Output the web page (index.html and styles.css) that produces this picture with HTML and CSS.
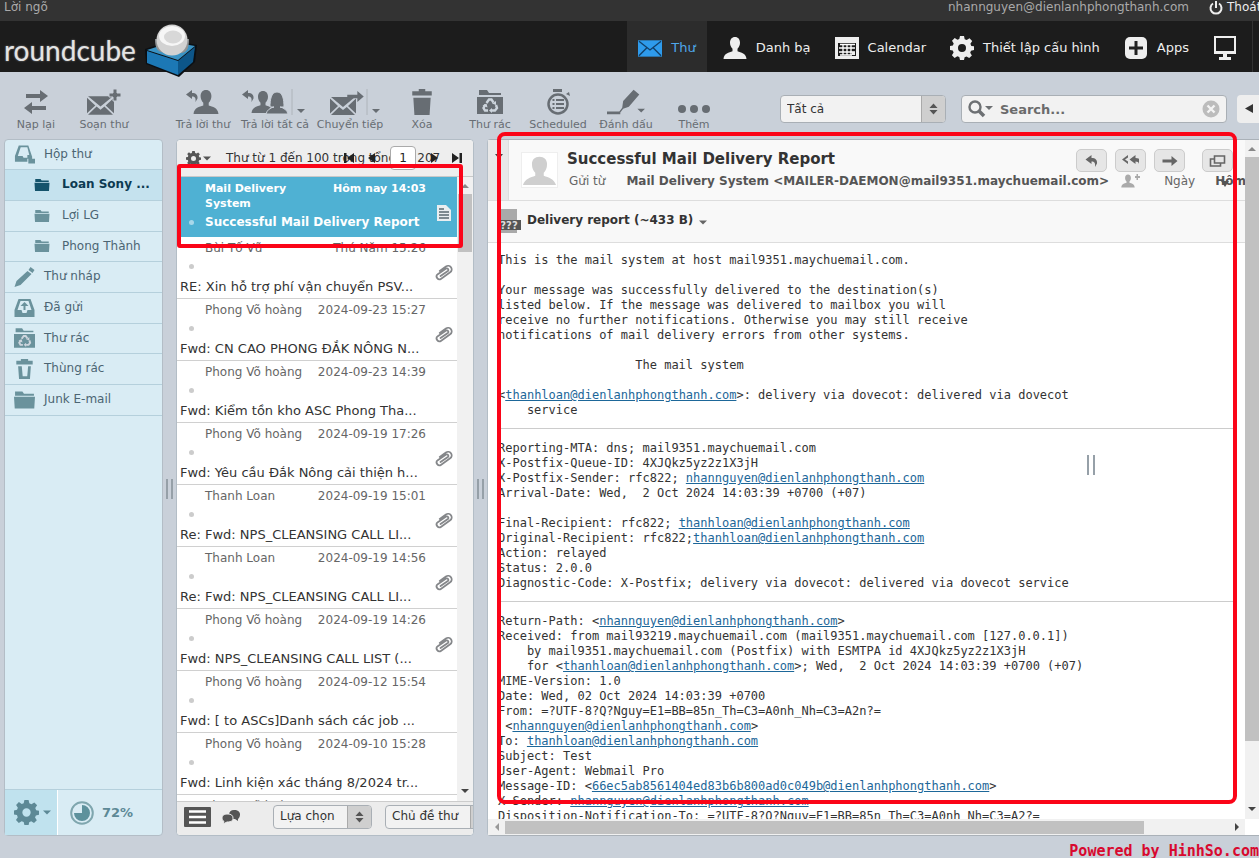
FILE: index.html
```html
<!DOCTYPE html>
<html lang="vi">
<head>
<meta charset="utf-8">
<title>Roundcube Webmail</title>
<link rel="stylesheet" href="styles.css">
</head>
<body>
<svg class="defs" aria-hidden="true">
  <symbol id="gear" viewBox="0 0 24 24"><path fill-rule="evenodd" d="M10 0h4l.7 3.2 2 .8L19.500 2.300l2.700 2.700-1.800 2.700.9 2.200L24 10.300v3.800l-3 .7-.8 2 1.700 2.700-2.700 2.600-2.700-1.600-1.900.8L14 24h-4l-.7-2.900-2-.8-2.700 1.700-2.700-2.700L3.600 16.500l-.8-2L0 14v-3.900l2.900-.7.8-2L2 4.800 4.700 2l2.700 1.800 1.900-.8zM12 8a4 4 0 1 0 0 8 4 4 0 0 0 0-8z"/></symbol>
  <symbol id="person" viewBox="0 0 24 24"><path d="M12 1c3.200 0 5 2.400 5 5.700 0 2.300-1 4.600-2.500 6v2.500c3.500 1.200 8.500 2 9 7.800H.5c.5-5.800 5.500-6.600 9-7.800v-2.500C8 11.300 7 9 7 6.700 7 3.400 8.800 1 12 1z"/></symbol>
  <symbol id="folder" viewBox="0 0 20 16"><path d="M1 0h7l1.500 2H19v2H1zM0 5h20l-.7 11H.7z"/></symbol>
  <symbol id="trash" viewBox="0 0 20 24"><path d="M7 0h6v2h6v4H1V2h6zM2 8h16l-1 16H3z"/></symbol>
  <symbol id="recycle" viewBox="0 0 26 24"><path d="M2 0h8l2 3h12v2H2zM0 7h26v17H0z"/><g fill="none" stroke="#cdd5dd" stroke-width="2.400"><path d="M9.500 13l2.500-3.500h2.500l2 3M19 15l1 3-2 2.500h-3M11 20.500H8L6.500 18l2-3.500"/></g><path fill="#cdd5dd" d="M15 13.500l4-2.500v4zM15 18v5l-3-2.500zM5.500 15.500l4-2 1 4z"/></symbol>
  <symbol id="envelope" viewBox="0 0 26 18"><path d="M1 0h24L13 10zM0 1.500L8 9 0 16.500zM26 1.500L18 9l8 7.500zM9.200 10L13 13l3.800-3L25 18H1z"/></symbol>
  <symbol id="back" viewBox="0 0 12 12"><path d="M0 4.500L6 0v3c4 0 6 2 5.500 5.500L9.500 12C10 8 9 6.500 6 6.500V9z"/></symbol>
  <symbol id="forward" viewBox="0 0 18 12"><path d="M0 4h11V0l7 6-7 6V8H0z"/></symbol>
  <symbol id="clip" viewBox="0 0 18 18"><path transform="rotate(8 9 9)" fill="none" stroke="#85878a" stroke-width="1.800" stroke-linecap="round" d="M6 12.500l6.500-6a1.500 1.500 0 0 0-2-2.200L3 11a2.800 2.800 0 0 0 4 4l8-7.500a3.500 3.500 0 0 0-5-5.200L4.500 7.500"/></symbol>
  <symbol id="updown" viewBox="0 0 10 12"><path d="M5 0l4.500 5h-9zM5 12L.5 7h9z"/></symbol>
</svg>

<div class="topline">
  <span>Lời ngõ</span>
  <span class="account">nhannguyen@dienlanhphongthanh.com</span>
  <a class="logout" href="#"><svg viewBox="0 0 14 14"><path d="M4 2.500a5.500 5.500 0 1 0 6 0M7 0v7" fill="none" stroke="currentColor" stroke-width="2"/></svg>Thoát</a>
</div>

<header class="header">
  <div class="brand"><span class="wordmark">roundcube</span>
    <svg class="cube" viewBox="0 -3 54 54"><path d="M1 22L28 13l25 5-2 17-16 15L2 37z" fill="#0b0f13"/><path d="M3 23l25-8 23 4-17 14z" fill="#3a93c4"/><path d="M3 24l31 10v14L3 36z" fill="#1c78b5"/><path d="M51 20L34 34v14l15-13z" fill="#0d5689"/><path d="M11 12h34c0 16-6 14-17 14s-17 0-17-14z" fill="#8f9294"/><circle cx="28" cy="13" r="15.500" fill="#d2d2d2"/><ellipse cx="28" cy="9" rx="13" ry="10" fill="#f6f6f6"/><ellipse cx="29" cy="10" rx="9" ry="6.500" fill="#d8d8d8"/></svg>
  </div>
  <nav class="tasks">
    <a class="task active" href="#"><svg viewBox="0 0 25 18"><path d="M0 1h25v17H0z" fill="#2e9bec"/><path d="M1 2l11.500 9L24 2M1 17l8-8M24 17l-8-8" fill="none" stroke="#123f68" stroke-width="1.400"/></svg>Thư</a>
    <a class="task" href="#"><svg><use href="#person"/></svg>Danh bạ</a>
    <a class="task" href="#"><svg viewBox="0 0 24 24"><path fill-rule="evenodd" d="M0 1h24v22H0zM3 7v13h18V7z"/><path d="M4 12h16M4 16h16M8 8v11M12 8v11M16 8v11M5 19h12M5 8.500h15" stroke="#fff" stroke-width="1.300"/><path d="M17 16h3v3h-3z"/></svg>Calendar</a>
    <a class="task" href="#"><svg><use href="#gear"/></svg>Thiết lập cấu hình</a>
    <a class="task" href="#"><svg viewBox="0 0 24 24"><rect x="1" y="1" width="22" height="22" rx="5"/><path d="M12 5v14M5 12h14" stroke="#222" stroke-width="3"/></svg>Apps</a>
    <a class="task screen" href="#" aria-label="Desktop"><svg viewBox="0 0 24 24"><path fill-rule="evenodd" d="M1 0h22v18H1zM3 2v13h18V2zM10 18h4v3h4v3H6v-3h4z"/></svg></a>
  </nav>
</header>

<div class="toolbar">
  <button class="tool"><svg viewBox="0 0 26 26"><path d="M3 5h14V1l8 6-8 6V9H3zM23 17H9v-4l-8 6 8 6v-4h14z"/></svg>Nạp lại</button>
  <button class="tool"><svg class="wide" viewBox="0 0 36 26"><svg x="1" y="7" width="27" height="19"><use href="#envelope"/></svg><path d="M27 0h4v4h4v4h-4v4h-4V8h-4V4h4z" stroke="#c9d0d9"/></svg>Soạn thư</button>
  <button class="tool reply"><svg class="wide" viewBox="0 0 36 26"><svg x="1" y="1" width="12" height="12"><use href="#back"/></svg><svg x="8" y="0" width="26" height="26"><use href="#person"/></svg></svg>Trả lời thư</button>
  <button class="tool w74"><svg class="xwide" viewBox="0 0 66 26"><svg x="0" y="1" width="12" height="12"><use href="#back"/></svg><svg x="9" y="0" width="24" height="26"><use href="#person"/></svg><path d="M28 18c0-7 1-15 7-15s7 8 7 15h-4c4 1 7 3 8 7H24c1-4 4-6 8-7z" stroke="#c9d0d9"/><path d="M50 0v26" stroke="#aeb4ba"/><path d="M55 20h8l-4 4z"/></svg>Trả lời tất cả</button>
  <button class="tool w76"><svg class="xwide" viewBox="0 0 66 26"><svg x="13" y="8" width="26" height="18"><use href="#envelope"/></svg><svg x="30" y="2" width="17" height="11"><use href="#forward"/></svg><path d="M50 0v26" stroke="#aeb4ba"/><path d="M55 20h8l-4 4z"/></svg>Chuyển tiếp</button>
  <button class="tool"><svg><use href="#trash"/></svg>Xóa</button>
  <button class="tool"><svg><use href="#recycle"/></svg>Thư rác</button>
  <button class="tool"><svg viewBox="0 0 26 26"><path d="M8 0h9v3H8zM21 5l3-2 1 4z"/><circle cx="13" cy="15" r="9.500" fill="none" stroke="currentColor" stroke-width="2.500"/><path d="M11 11h8M11 15h8M11 19h8M7.500 11h2M7.500 15h2M7.500 19h2" stroke="currentColor" stroke-width="2"/></svg>Scheduled</button>
  <button class="tool"><svg class="wide" viewBox="0 0 40 26"><path d="M28 0l6 5-11 13-6 2-3 4-1-1 3-4 1-7zM0 23h14v3H0zM32 20h8l-4 4z"/></svg>Đánh dấu</button>
  <button class="tool"><svg class="wide" viewBox="0 0 36 26"><circle cx="6" cy="20" r="4"/><circle cx="18" cy="20" r="4"/><circle cx="30" cy="20" r="4"/></svg>Thêm</button>
  <div class="filters">
    <div class="picker filter"><select aria-label="Bộ lọc"><option>Tất cả</option></select><svg><use href="#updown"/></svg></div>
    <div class="search">
      <svg class="lens" viewBox="0 0 26 18"><circle cx="7" cy="7" r="5.500" fill="none" stroke="#6d7073" stroke-width="2.400"/><path d="M11 11l5 5" stroke="#6d7073" stroke-width="3.500"/><path d="M17 6h8l-4 4z" fill="#6d7073"/></svg>
      <input type="text" placeholder="Search..." aria-label="Search">
      <button class="clear" aria-label="Clear"><svg viewBox="0 0 18 18"><circle cx="9" cy="9" r="8.500" fill="#bcbcbc"/><path d="M5.500 5.500l7 7M12.500 5.500l-7 7" stroke="#f4f4f4" stroke-width="2.400"/></svg></button>
    </div>
    <button class="collapse" aria-label="Collapse"><svg viewBox="0 0 8 10"><path d="M8 0v9L0 4.500z"/></svg></button>
  </div>
</div>

<main class="main">
  <aside class="folders">
    <ul>
      <li><svg viewBox="0 0 22 20"><path fill-rule="evenodd" d="M5 1h10l4 12v2h-5v3H1v-6zM7 3L4 12h5l1 2h4V11h2L14 3zM15 15h7v5h-7z"/></svg>Hộp thư</li>
      <li class="sub current"><svg><use href="#folder"/></svg>Loan Sony ...</li>
      <li class="sub"><svg><use href="#folder"/></svg>Lợi LG</li>
      <li class="sub"><svg><use href="#folder"/></svg>Phong Thành</li>
      <li><svg viewBox="0 0 20 20"><path d="M16 0l4 3-2 3-4-3zM13 4l4 3L6 18l-6 2 2-6z"/></svg>Thư nháp</li>
      <li><svg viewBox="0 0 20 20"><path fill-rule="evenodd" d="M4 1h12l4 11v7H0v-7zM6 3l-3 9h4l1 3h4l1-3h4l-3-9zM10 4l4 4h-3v4H9V8H6z"/></svg>Đã gửi</li>
      <li><svg><use href="#recycle"/></svg>Thư rác</li>
      <li><svg viewBox="0 0 20 22"><path fill-rule="evenodd" d="M6 0h8v2h5v4H1V2h5zM3 8h4l1 11h5l1-11h3l-1 14H4z"/></svg>Thùng rác</li>
      <li><svg><use href="#folder"/></svg>Junk E-mail</li>
    </ul>
    <div class="folder-foot">
      <button class="options" aria-label="Options"><svg class="big"><use href="#gear"/></svg><svg class="arrow" viewBox="0 0 8 4"><path d="M0 0h8L4 4z"/></svg></button>
      <div class="quota"><svg viewBox="0 0 24 24"><circle cx="12" cy="12" r="10.800" fill="none" stroke="#7fa6ae" stroke-width="2"/><path d="M12 12V4a8 8 0 1 1-8 8z" fill="#5d919c"/></svg>72%</div>
    </div>
    <span class="splitter"></span>
  </aside>

  <section class="list">
    <div class="list-head">
      <svg class="cog"><use href="#gear"/></svg><svg class="arrow" viewBox="0 0 8 4"><path d="M0 0h8L4 4z"/></svg>
      <span class="count">Thư từ 1 đến 100 trong tổng số 207</span>
      <div class="pager">
        <svg viewBox="0 0 10 10"><path d="M0 0h2.500v10H0zM10 0v10L3 5z"/></svg>
        <svg viewBox="0 0 10 10"><path d="M8 0v10L1 5z"/></svg>
        <input type="text" value="1" aria-label="Trang">
        <svg viewBox="0 0 10 10"><path d="M2 0v10l7-5z"/></svg>
        <svg viewBox="0 0 10 10"><path d="M10 0H7.500v10H10zM0 0v10l7-5z"/></svg>
      </div>
    </div>
    <div class="list-body">
      <div class="rows">
        <article class="row selected"><span class="from">Mail Delivery System</span><time>Hôm nay 14:03</time><p>Successful Mail Delivery Report</p><svg class="doc" viewBox="0 0 14 16"><path d="M0 0h9l5 5v11H0z" fill="#e9eef0"/><path d="M2 4h5M2 7h10M2 10h10M2 13h10" stroke="#5a6a70" stroke-width="1.400"/></svg></article>
        <article class="row"><span class="from">Bùi Tố Vũ</span><time>Thứ Năm 15:26</time><p>RE: Xin hỗ trợ phí vận chuyển PSV...</p><svg><use href="#clip"/></svg></article>
        <article class="row"><span class="from">Phong Võ hoàng</span><time>2024-09-23 15:27</time><p>Fwd: CN CAO PHONG ĐẮK NÔNG N...</p><svg><use href="#clip"/></svg></article>
        <article class="row"><span class="from">Phong Võ hoàng</span><time>2024-09-23 14:39</time><p>Fwd: Kiểm tồn kho ASC Phong Tha...</p></article>
        <article class="row"><span class="from">Phong Võ hoàng</span><time>2024-09-19 17:26</time><p>Fwd: Yêu cầu Đắk Nông cải thiện h...</p><svg><use href="#clip"/></svg></article>
        <article class="row"><span class="from">Thanh Loan</span><time>2024-09-19 15:01</time><p>Re: Fwd: NPS_CLEANSING CALL LI...</p><svg><use href="#clip"/></svg></article>
        <article class="row"><span class="from">Thanh Loan</span><time>2024-09-19 14:56</time><p>Re: Fwd: NPS_CLEANSING CALL LI...</p><svg><use href="#clip"/></svg></article>
        <article class="row"><span class="from">Phong Võ hoàng</span><time>2024-09-19 14:26</time><p>Fwd: NPS_CLEANSING CALL LIST (...</p><svg><use href="#clip"/></svg></article>
        <article class="row"><span class="from">Phong Võ hoàng</span><time>2024-09-12 15:54</time><p>Fwd: [ to ASCs]Danh sách các job ...</p></article>
        <article class="row"><span class="from">Phong Võ hoàng</span><time>2024-09-10 15:28</time><p>Fwd: Linh kiện xác tháng 8/2024 tr...</p></article>
        <article class="row"><span class="from">Phong Võ hoàng</span><time>2024-09-10 15:27</time><p></p></article>
      </div>
      <div class="vbar"><i class="up"></i><i class="thumb"></i><i class="down"></i></div>
    </div>
    <div class="list-foot">
      <svg class="mode" viewBox="0 0 27 20"><rect width="27" height="20" rx="1"/><path d="M5 4.500h17M5 10h17M5 15.500h17" stroke="#fff" stroke-width="2.600"/></svg>
      <svg class="threads" viewBox="0 0 18 14"><path d="M12 0c4 0 6 2 6 4.500 0 2-1 3.500-2 4.500v2l-3-2c-5 0-6-2-6-4.500S9 0 12 0z"/><path d="M6 4c-4 0-6 1.500-6 4 0 1.500.5 2.500 2 3.500L1 14l4-2c5 0 6-1.500 6-4S9 4 6 4z" stroke="#ececec"/></svg>
      <div class="picker choose"><select aria-label="Lựa chọn"><option>Lựa chọn</option></select><svg><use href="#updown"/></svg></div>
      <div class="picker threads-pick"><select aria-label="Chủ đề"><option>Chủ đề thư</option></select><svg><use href="#updown"/></svg></div>
    </div>
    <span class="splitter"></span>
    <span class="mark mark-row"></span>
  </section>

  <section class="preview">
    <div class="pane">
      <div class="message">
        <div class="msg-head">
          <div class="toggle"><svg class="arrow" viewBox="0 0 8 5"><path d="M0 0h8L4 5z"/></svg></div>
          <svg class="avatar" viewBox="0 0 37 36"><path d="M0 0h37v36H0z" fill="#fff"/><path d="M18.500 4c5 0 8 3 8 8 0 4-1.500 7-3.500 9v3c5 2 11 3 13 10H1c2-7 8-8 13-10v-3c-2-2-3.500-5-3.500-9 0-5 3-8 8-8z" fill="#cfcfcf"/></svg>
          <div class="subject">
            <h1>Successful Mail Delivery Report</h1>
            <dl><dt>Gửi từ</dt><dd>Mail Delivery System &lt;MAILER-DAEMON@mail9351.maychuemail.com&gt;</dd><dd><svg class="addcontact" viewBox="0 0 19 14"><svg width="14" height="14"><use href="#person"/></svg><path d="M14 2h1.500V0h1.500v2H19v2h-2v2h-1.500V4H14z"/></svg></dd><dt>Ngày</dt><dd class="date">Hôm</dd></dl>
          </div>
          <div class="actions">
            <button aria-label="Reply"><svg><use href="#back"/></svg></button>
            <button aria-label="Reply all"><svg viewBox="0 0 17 12"><path d="M6 0v2.500L3 4.500l3 2V9L0 4.500z"/><svg x="5" width="12" height="12"><use href="#back"/></svg></svg></button>
            <button aria-label="Forward"><svg viewBox="0 0 16 12"><path d="M1 4.500h9V1l6 5-6 5V7.500H1z"/></svg></button>
            <button aria-label="Open"><svg viewBox="0 0 16 12"><path d="M5 1h10v7H5zM5 4H1v7h10V8" fill="none" stroke="currentColor" stroke-width="1.600"/></svg></button>
          </div>
          <svg class="more" viewBox="0 0 8 6"><path d="M0 0h8L4 6z"/></svg>
        </div>
        <div class="attachment">
          <svg class="unknown" viewBox="0 0 24 24"><path d="M1 0h19v12H1z" fill="#a9a9a9"/><path d="M0 11h24v10H0z" fill="#555"/><path d="M1 21h19v3H1z" fill="#a9a9a9"/><text x="12" y="20" text-anchor="middle">???</text></svg>
          <strong>Delivery report (~433 B)</strong>
          <svg class="arrow" viewBox="0 0 8 4"><path d="M0 0h8L4 4z"/></svg>
        </div>
        <div class="text">
<pre>This is the mail system at host mail9351.maychuemail.com.

Your message was successfully delivered to the destination(s)
listed below. If the message was delivered to mailbox you will
receive no further notifications. Otherwise you may still receive
notifications of mail delivery errors from other systems.

                   The mail system

&lt;<a href="#">thanhloan@dienlanhphongthanh.com</a>&gt;: delivery via dovecot: delivered via dovecot
    service</pre>
<pre>Reporting-MTA: dns; mail9351.maychuemail.com
X-Postfix-Queue-ID: 4XJQkz5yz2z1X3jH
X-Postfix-Sender: rfc822; <a href="#">nhannguyen@dienlanhphongthanh.com</a>
Arrival-Date: Wed,  2 Oct 2024 14:03:39 +0700 (+07)

Final-Recipient: rfc822; <a href="#">thanhloan@dienlanhphongthanh.com</a>
Original-Recipient: rfc822;<a href="#">thanhloan@dienlanhphongthanh.com</a>
Action: relayed
Status: 2.0.0
Diagnostic-Code: X-Postfix; delivery via dovecot: delivered via dovecot service</pre>
<pre>Return-Path: &lt;<a href="#">nhannguyen@dienlanhphongthanh.com</a>&gt;
Received: from mail93219.maychuemail.com (mail9351.maychuemail.com [127.0.0.1])
    by mail9351.maychuemail.com (Postfix) with ESMTPA id 4XJQkz5yz2z1X3jH
    for &lt;<a href="#">thanhloan@dienlanhphongthanh.com</a>&gt;; Wed,  2 Oct 2024 14:03:39 +0700 (+07)
MIME-Version: 1.0
Date: Wed, 02 Oct 2024 14:03:39 +0700
From: =?UTF-8?Q?Nguy=E1=BB=85n_Th=C3=A0nh_Nh=C3=A2n?=
 &lt;<a href="#">nhannguyen@dienlanhphongthanh.com</a>&gt;
To: <a href="#">thanhloan@dienlanhphongthanh.com</a>
Subject: Test
User-Agent: Webmail Pro
Message-ID: &lt;<a href="#">66ec5ab8561404ed83b6b800ad0c049b@dienlanhphongthanh.com</a>&gt;
X-Sender: <a href="#">nhannguyen@dienlanhphongthanh.com</a>
Disposition-Notification-To: =?UTF-8?Q?Nguy=E1=BB=85n_Th=C3=A0nh_Nh=C3=A2?=</pre>
        </div>
      </div>
      <div class="vbar"><i class="up"></i><i class="thumb"></i><i class="down"></i></div>
      <div class="hbar"><i class="left"></i><i class="thumb"></i><i class="right"></i></div>
    </div>
    <span class="splitter inner"></span>
    <span class="mark mark-message"></span>
  </section>
</main>
<footer class="credit">Powered by HinhSo.com</footer>
</body>
</html>
```
FILE: styles.css
```css
* { box-sizing: border-box; }
html, body { height: 100%; }
body {
  margin: 0;
  display: flex;
  flex-direction: column;
  overflow: hidden;
  background: #c9d0d9;
  color: #333;
  font: 12px/15px "DejaVu Sans", Verdana, sans-serif;
}
svg { fill: currentColor; flex: none; display: block; }
.defs { position: absolute; width: 0; height: 0; }
button, input, select { font: inherit; color: inherit; margin: 0; }
button { border: 0; padding: 0; background: none; }
a { color: inherit; }
ul, dl, dd, p, h1, pre { margin: 0; padding: 0; }

.topline {
  display: flex;
  justify-content: flex-end;
  height: 21px;
  padding-left: 4px;
  background: #333;
  color: #aaa;
  white-space: nowrap;
}
.topline span:first-child { margin-right: auto; }
.logout { display: flex; width: 50px; margin-left: 20px; color: #eee; text-decoration: none; gap: 4px; }
.logout svg { width: 14px; height: 14px; margin-top: 1px; }

.header { display: flex; height: 51px; background: #1c1c1c; }
.brand { display: flex; padding: 3px 0 0 4px; gap: 8px; flex: 1; }
.wordmark { color: #e4e4e4; font: 28px/52px Lato, sans-serif; text-shadow: 0 0 2px #888; }
.cube { width: 54px; height: 54px; position: relative; z-index: 1; }
.tasks { display: flex; white-space: nowrap; }
.task { display: flex; align-items: center; gap: 9px; padding: 2px 12px 0; color: #eee; font-size: 13px; text-decoration: none; }
.task svg { width: 24px; height: 24px; }
.task.active { background: #2c2c2c; color: #4fa8ea; margin-right: 4px; padding: 2px 11px 0; }
.screen { margin-right: 6px; border-right: 1px solid #333; padding-right: 15px; }

.toolbar { display: flex; height: 67px; padding-left: 2px; }
.tool {
  display: flex; flex-direction: column; align-items: center; flex: none;
  width: 68px; padding: 17px 0 0; gap: 2px;
  color: #676d73; font-size: 11px; line-height: 15px; white-space: nowrap;
}
.tool > svg { width: 26px; height: 26px; }
.tool > svg.wide { width: 38px; }
.tool > svg.xwide { width: 66px; }
.reply { width: 70px; margin-left: 30px; }
.w74 { width: 74px; }
.w76 { width: 76px; }
.filters { display: flex; flex: 1; justify-content: flex-end; align-items: flex-start; padding-top: 23px; min-width: 0; }
.picker { display: flex; align-items: center; border: 1px solid #a9afb5; border-radius: 4px; background: #f2f2f2; overflow: hidden; color: #333; }
.picker select { appearance: none; border: 0; background: none; flex: 1; min-width: 0; padding: 0 6px; }
.picker svg { width: 24px; height: 28px; padding: 8px 7px; background: #cfcfcf; border-left: 1px solid #aaa; color: #555; }
.filter { width: 166px; height: 28px; margin-right: 15px; }
.search { display: flex; align-items: center; width: 266px; height: 28px; padding: 0 6px; gap: 6px; border: 1px solid #a9afb5; border-radius: 4px; background: #f2f2f2; }
.lens { width: 26px; height: 18px; }
.search input { flex: 1; min-width: 0; border: 0; background: none; padding: 0; font-size: 13px; font-weight: bold; }
.search input::placeholder { color: #6b6b6b; opacity: 1; }
.clear svg { width: 18px; height: 18px; }
.collapse { width: 22px; height: 28px; margin-left: 10px; padding-left: 8px; border-radius: 4px 0 0 4px; background: #eee; }
.collapse svg { width: 8px; height: 10px; }

.main { flex: 1; min-height: 0; display: grid; grid-template-columns: 159px 298px minmax(0, 1fr); gap: 14px; padding-left: 4px; }
.main > .list { margin-left: -1px; margin-right: 1px; }
.main > .preview { margin-left: -2px; }
.folders, .list, .preview { position: relative; display: flex; flex-direction: column; min-height: 0; }
.folders, .list { border: 1px solid #b3bdc6; border-radius: 4px; }
.folders { background: #d9ecf4; color: #4c6573; }
.folders ul { flex: 1; list-style: none; }
.folders li { display: flex; align-items: center; gap: 9px; height: 31px; padding: 0 0 1px 9px; border-bottom: 1px solid #b5d0dc; }
.folders li:nth-child(3n+1) { height: 30px; }
.folders li svg { width: 21px; height: 20px; color: #6a929c; }
.folders .sub { padding-left: 29px; gap: 12px; }
.folders .sub svg { width: 16px; height: 12px; }
.folders .current { background: #c5e2ee; color: #0d3b52; font-weight: bold; }
.folders .current svg { color: #14536b; }
.folder-foot { display: flex; height: 46px; border-top: 1px solid #b5d0dc; color: #5d8996; }
.options { display: flex; align-items: center; gap: 4px; width: 53px; padding-left: 9px; background: #c0e2ee; border-right: 1px solid #fff; }
.options .big { width: 25px; height: 25px; }
.arrow { width: 8px; height: 5px; }
.quota { display: flex; align-items: center; gap: 8px; padding-left: 12px; font-size: 13px; font-weight: bold; }
.quota svg { width: 24px; height: 24px; }

.splitter { position: absolute; right: -11px; top: 339px; width: 7px; height: 20px; border: solid #96a0a8; border-width: 0 2px; }
.splitter.inner { right: 164px; top: 315px; width: 8px; }
.mark { position: absolute; border: 4px solid #fb0418; pointer-events: none; }
.mark-row { left: 0; top: 24px; width: 286px; height: 84px; border-radius: 3px; }
.mark-message { left: 9px; right: 22px; top: -8px; bottom: 31px; border-radius: 8px; }

.list { background: #fff; }
.list-head { position: relative; display: flex; align-items: center; height: 37px; padding-left: 9px; background: #eee; border-bottom: 1px solid #c8c8c8; border-radius: 4px 4px 0 0; color: #555; }
.cog { width: 15px; height: 15px; margin-right: 2px; }
.count { margin-left: 15px; color: #333; white-space: nowrap; }
.pager { position: absolute; right: 11px; top: 6px; display: flex; align-items: center; gap: 13px; color: #222; }
.pager svg { width: 10px; height: 10px; }
.pager input { width: 26px; height: 24px; padding: 0; text-align: center; border: 1px solid #aaa; border-radius: 4px; background: #fff; }
.list-body { flex: 1; min-height: 0; display: flex; overflow: hidden; }
.rows { flex: 1; min-width: 0; }
.row {
  position: relative; height: 62px; padding: 4px 31px 0 3px;
  display: grid; grid-template-columns: 25px minmax(0, 1fr) auto; grid-template-rows: 24px 14px 15px;
  border-bottom: 1px solid #d0d0d0; color: #666; white-space: nowrap;
}
.row::before { content: ""; position: absolute; left: 12px; top: 27px; width: 5px; height: 5px; border-radius: 50%; background: #ccc; }
.from { grid-column: 2; }
.row p { grid-column: 1 / -1; grid-row: 3; color: #333; margin-right: -20px; font-size: 13px; }
.row > svg { position: absolute; right: 4px; top: 27px; width: 18px; height: 18px; }
.row.selected { height: 60px; background: #4fb1d3; border-bottom: 0; color: #fff; font-weight: bold; grid-template-rows: 34px 15px; font-size: 11px; }
.row.selected .from { white-space: normal; }
.row.selected p { grid-column: 2 / -1; grid-row: 2; color: #fff; font-size: 12px; }
.row.selected::before { top: 43px; background: #a8d8ea; }
.row > svg.doc { right: 6px; top: 28px; width: 14px; height: 16px; }
.list-foot { display: flex; align-items: center; height: 34px; padding: 0 0 4px 7px; background: #ececec; border-top: 1px solid #ccc; overflow: hidden; color: #555; border-radius: 0 0 4px 4px; }
.list-foot .mode { width: 27px; height: 20px; margin-right: 11px; }
.threads { width: 18px; height: 14px; }
.choose { width: 99px; height: 24px; margin-left: 33px; flex: none; }
.threads-pick { width: 110px; height: 24px; margin-left: 13px; flex: none; }

.vbar { position: relative; width: 16px; background: #f1f1f1; display: flex; flex-direction: column; align-items: center; flex: none; }
.vbar .thumb { width: 14px; background: #c1c1c1; height: 58px; }
.up, .down { width: 8px; height: 17px; }
.up::before, .down::before, .left::before, .right::before { content: ""; display: block; border: 4px solid transparent; }
.up::before { border-bottom-color: #888; margin-top: 3px; }
.down { margin-top: auto; height: 12px; }
.down::before { border-top-color: #444; }

.preview { border-top: 1px solid #aab1b8; border-left: 1px solid #b3bdc6; border-bottom: 1px solid #aab1b8; border-radius: 4px 0 0 4px; background: #fff; }
.pane { flex: 1; min-height: 0; display: grid; grid-template: minmax(0, 1fr) 16px / minmax(0, 1fr) 14px; }
.message { overflow: hidden; }
.pane .vbar { width: 14px; }
.pane .vbar .thumb { height: 86%; }
.hbar { display: flex; align-items: center; background: #f1f1f1; padding-left: 5px; grid-column: 1; }
.hbar .thumb { width: 85%; height: 13px; background: #c1c1c1; }
.left { width: 12px; }
.left::before { border-right-color: #999; margin-left: -2px; width: 0; }
.right { margin-left: auto; width: 10px; }
.right::before { border-left-color: #444; width: 0; }

.msg-head { position: relative; display: flex; height: 61px; background: #f9f9f9; border-bottom: 1px solid #ddd; white-space: nowrap; }
.toggle { width: 21px; padding: 14px 0 0 7px; background: #e8e8e8; border-right: 1px solid #ddd; color: #444; flex: none; }
.avatar { width: 37px; height: 36px; margin: 12px 9px 0 12px; border: 1px solid #eee; }
.subject { padding-top: 9px; }
.subject h1 { font-size: 15px; line-height: 20px; color: #333; }
.subject dl { display: flex; margin-top: 5px; padding-left: 2px; color: #666; }
.subject dd { margin-left: 21px; font-weight: bold; color: #555; }
.subject dd + dd { margin-left: 12px; }
.subject dt + dd.date { margin-left: 20px; }
.subject dd + dt { margin-left: 24px; }
.addcontact { width: 19px; height: 14px; color: #aaa; }
.actions { position: absolute; right: 12px; top: 9px; display: flex; gap: 8px; }
.actions button { display: flex; align-items: center; justify-content: center; width: 31px; height: 23px; border: 1px solid #ccc; border-radius: 5px; background: #e6e6e6; color: #666; }
.actions button:last-child { margin-left: 9px; }
.actions svg { width: 17px; height: 12px; }
.more { position: absolute; right: 16px; top: 41px; width: 8px; height: 6px; color: #555; }
.attachment { display: flex; align-items: center; gap: 6px; height: 42px; padding: 0 0 2px 9px; background: #f8f8f8; border-bottom: 1px solid #ddd; }
.attachment .arrow { margin-top: 3px; color: #666; }
.unknown { width: 24px; height: 24px; }
.unknown text { font: bold 10px "DejaVu Sans", sans-serif; fill: #ddd; }
.text { padding: 0 11px 0 10px; }
.text pre { padding: 12px 0 10px; font: 12px/15px "DejaVu Sans Mono", monospace; color: #333; }
.text pre:first-child { padding-top: 10px; }
.text pre + pre { border-top: 1px solid #ccc; }
.text a { color: #1d6799; }

.credit { height: 22px; text-align: right; color: #d8092f; font: bold 15px/30px "DejaVu Sans Mono", monospace; overflow: hidden; }
```
